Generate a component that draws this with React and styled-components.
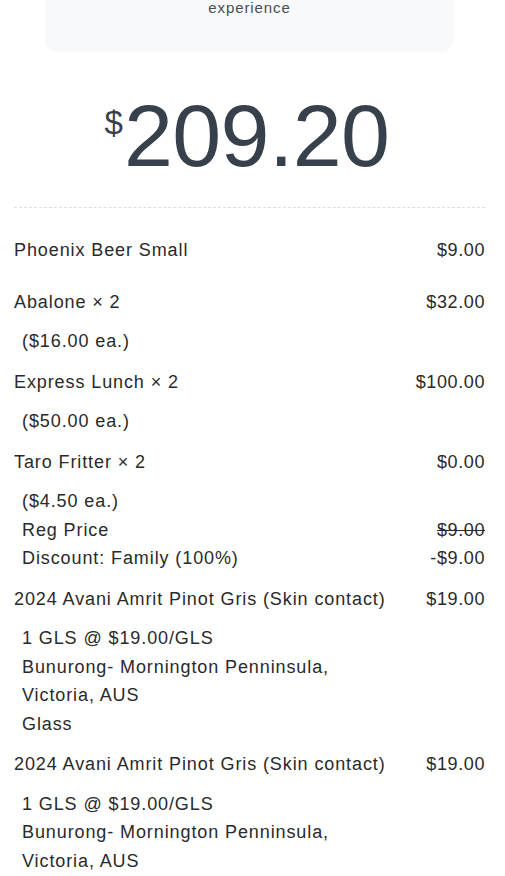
import React from 'react';
import styled, { createGlobalStyle } from 'styled-components';

const GlobalStyle = createGlobalStyle`
    html, body {
        margin: 0;
        padding: 0;
        background: #ffffff;
    }
    body {
        font-family: "Liberation Sans", Arial, sans-serif;
        color: #2a2a2a;
    }
`;

const items = [
    { name: 'Phoenix Beer Small', price: '$9.00', details: [] },
    { name: 'Abalone × 2', price: '$32.00', details: [{ text: '($16.00 ea.)' }] },
    { name: 'Express Lunch × 2', price: '$100.00', details: [{ text: '($50.00 ea.)' }] },
    {
        name: 'Taro Fritter × 2',
        price: '$0.00',
        details: [
            { text: '($4.50 ea.)' },
            { text: 'Reg Price', amount: '$9.00', struck: true },
            { text: 'Discount: Family (100%)', amount: '-$9.00' },
        ],
    },
    {
        name: '2024 Avani Amrit Pinot Gris (Skin contact)',
        price: '$19.00',
        details: [
            { text: '1 GLS @ $19.00/GLS' },
            { text: 'Bunurong- Mornington Penninsula,' },
            { text: 'Victoria, AUS' },
            { text: 'Glass' },
        ],
    },
    {
        name: '2024 Avani Amrit Pinot Gris (Skin contact)',
        price: '$19.00',
        details: [
            { text: '1 GLS @ $19.00/GLS' },
            { text: 'Bunurong- Mornington Penninsula,' },
            { text: 'Victoria, AUS' },
            { text: 'Glass' },
        ],
    },
];

function App() {
    return (
        <Page>
            <GlobalStyle />
            <Column>
                <ThanksCard>
                    <ThanksText>experience</ThanksText>
                </ThanksCard>

                <Total>
                    <Currency>$</Currency>
                    <Amount>209.20</Amount>
                </Total>

                <Divider />

                <ItemList>
                    {items.map((item, i) => (
                        <Item key={i}>
                            <ItemRow>
                                <ItemName>{item.name}</ItemName>
                                <ItemPrice>{item.price}</ItemPrice>
                            </ItemRow>
                            <Details>
                                {item.details.map((d, j) => (
                                    <DetailLine key={j}>
                                        <span>{d.text}</span>
                                        {d.amount && <DetailAmount $struck={d.struck}>{d.amount}</DetailAmount>}
                                    </DetailLine>
                                ))}
                            </Details>
                        </Item>
                    ))}
                </ItemList>
            </Column>
        </Page>
    );
}

const Page = styled.div`
    width: 100%;
    height: 876px;
    overflow: hidden;
    background: #fff;
`;

const Column = styled.div`
    margin: 0 20px 0 14px;
    display: flex;
    flex-direction: column;
`;

const ThanksCard = styled.div`
    margin: 0 32px;
    padding: 0 16px 34px;
    background: #f8f9fa;
    border-radius: 0 0 12px 12px;
    box-shadow: 0 1px 3px rgba(0, 0, 0, 0.05);
    text-align: center;
`;

const ThanksText = styled.div`
    font-size: 15px;
    line-height: 16px;
    letter-spacing: 0.9px;
    color: #4a4d52;
`;

const Total = styled.div`
    margin-top: 42px;
    padding-right: 5px;
    display: flex;
    justify-content: center;
    align-items: flex-start;
    color: #37414b;
`;

const Currency = styled.span`
    font-size: 33px;
    line-height: 1;
    margin-top: 14px;
    margin-right: 1px;
`;

const Amount = styled.span`
    font-size: 88px;
    line-height: 88px;
    letter-spacing: -0.6px;
`;

const Divider = styled.hr`
    margin: 27px 0 0;
    border: 0;
    border-top: 1px dashed #dcdfe2;
    height: 0;
`;

const ItemList = styled.div`
    padding-top: 28px;
    display: flex;
    flex-direction: column;
    gap: 12px;
`;

const Item = styled.div`
    display: flex;
    flex-direction: column;
`;

const ItemRow = styled.div`
    display: flex;
    justify-content: space-between;
    align-items: flex-start;
    gap: 16px;
    font-size: 18px;
    line-height: 28px;
    letter-spacing: 0.9px;
`;

const ItemName = styled.span``;

const ItemPrice = styled.span`
    white-space: nowrap;
    letter-spacing: 0.6px;
`;

const Details = styled.div`
    margin-top: 11.5px;
    padding-left: 8px;
    display: flex;
    flex-direction: column;
`;

const DetailLine = styled.div`
    display: flex;
    justify-content: space-between;
    font-size: 18px;
    line-height: 28.5px;
    letter-spacing: 0.9px;
`;

const DetailAmount = styled.span`
    letter-spacing: 0.6px;
    text-decoration: ${p => (p.$struck ? 'line-through' : 'none')};
`;

export default App;
